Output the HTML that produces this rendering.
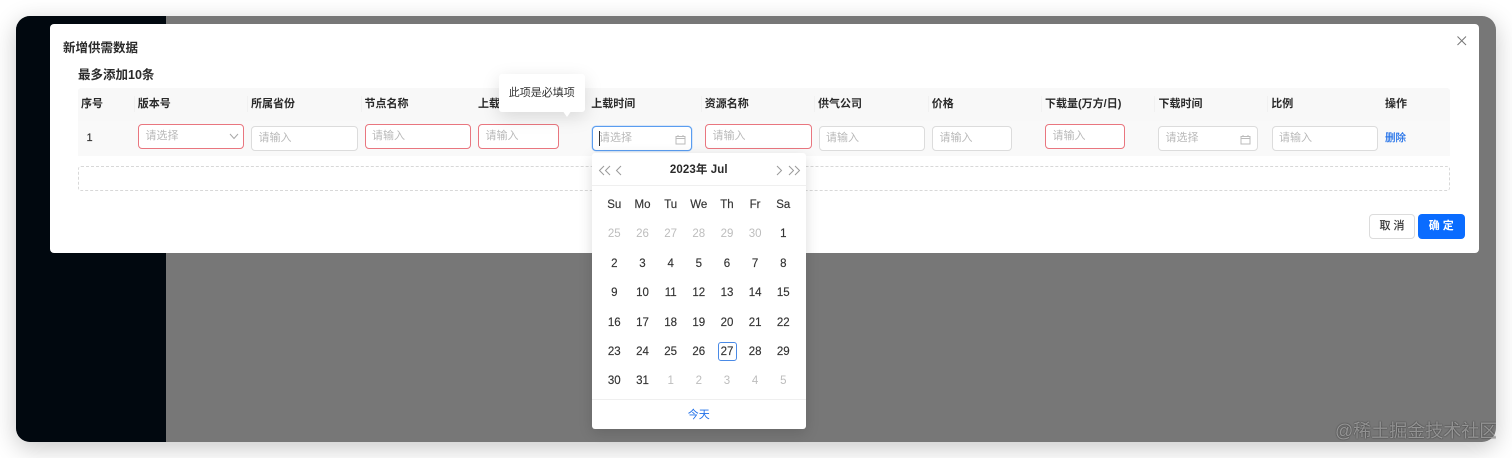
<!DOCTYPE html>
<html lang="zh"><head><meta charset="utf-8">
<style>
*{box-sizing:border-box}
html,body{margin:0;padding:0;width:1512px;height:458px;overflow:hidden;background:#fff}
body{font-family:"Liberation Sans","Noto Sans CJK SC",sans-serif;color:#262626;position:relative}
.a{position:absolute;white-space:nowrap}
#wrap{position:absolute;left:0;top:0;width:1512px;height:458px;filter:blur(.35px)}
#win{left:16px;top:16px;width:1480px;height:426px;border-radius:14px;background:#777;overflow:hidden;box-shadow:0 6px 24px rgba(0,0,0,.22)}
#side{left:0;top:0;width:150.300px;height:426px;background:#01080f}
#modal{left:49.500px;top:23.500px;width:1429.500px;height:229px;background:#fff;border-radius:4px}
.th{font-size:11px;font-weight:700;top:96.500px;line-height:14px;color:#2a2a2a}
.sep{width:1px;height:16px;top:96px;background:#f1f1f1}
.ip{height:25px;border:1.400px solid #dcdcdc;border-radius:4px;background:#fff;font-size:11px;color:#b9b9b9;line-height:23.500px;padding-left:6.500px}
.er{border-color:#e9767f;top:123.500px}
.no{top:125.500px}
.pop{background:#fff;border-radius:3px;box-shadow:0 4px 14px rgba(0,0,0,.14)}
.d{width:28px;text-align:center;font-size:11.500px;line-height:16px;color:#333;-webkit-text-stroke:.15px #333}
.m{color:#bdbdbd;-webkit-text-stroke:0}
</style></head><body>
<div id="wrap">
<div id="win" class="a"><div id="side" class="a"></div></div>
<div id="modal" class="a"></div>

<div class="a" style="left:63px;top:40px;font-size:12.500px;font-weight:700;line-height:16px;color:#2a2a2a">新增供需数据</div>
<div class="a" style="left:78px;top:66.500px;font-size:12.500px;font-weight:700;line-height:16px;color:#2a2a2a">最多添加10条</div>
<svg class="a" style="left:1456px;top:35px" width="12" height="12" viewBox="0 0 12 12"><path d="M1.500 1.500L10 10M10 1.500L1.500 10" stroke="#777" stroke-width="1" fill="none"/></svg>

<div class="a" style="left:78px;top:88px;width:1372px;height:33px;background:#f8f8f8;border-radius:3px 3px 0 0"></div>
<div class="a" style="left:78px;top:121px;width:1372px;height:35px;background:#f9f9f9"></div>

<div class="a th" style="left:81px">序号</div>
<div class="a th" style="left:137.800px">版本号</div>
<div class="a th" style="left:251px">所属省份</div>
<div class="a th" style="left:364.500px">节点名称</div>
<div class="a th" style="left:478px">上载</div>
<div class="a th" style="left:591.300px">上载时间</div>
<div class="a th" style="left:704.800px">资源名称</div>
<div class="a th" style="left:818px">供气公司</div>
<div class="a th" style="left:931.800px">价格</div>
<div class="a th" style="left:1045px">下载量(万方/日)</div>
<div class="a th" style="left:1158.500px">下载时间</div>
<div class="a th" style="left:1271.300px">比例</div>
<div class="a th" style="left:1385px">操作</div>
<div class="a sep" style="left:134px"></div><div class="a sep" style="left:247px"></div><div class="a sep" style="left:361px"></div><div class="a sep" style="left:701px"></div><div class="a sep" style="left:814px"></div><div class="a sep" style="left:928px"></div><div class="a sep" style="left:1041px"></div><div class="a sep" style="left:1154px"></div><div class="a sep" style="left:1267px"></div>

<div class="a" style="left:86.500px;top:130.500px;font-size:11px;line-height:14px;color:#333;-webkit-text-stroke:.15px #333">1</div>

<div class="a ip er" style="left:138px;width:106px">请选择<svg class="a" style="left:90px;top:8px" width="10" height="7" viewBox="0 0 10 7"><path d="M1 1L5 5.500L9 1" stroke="#a8a8a8" fill="none"/></svg></div>
<div class="a ip no" style="left:251px;width:106.500px">请输入</div>
<div class="a ip er" style="left:364.500px;width:106.500px">请输入</div>
<div class="a ip er" style="left:478px;width:81px">请输入</div>
<div class="a ip no" style="left:591.500px;width:100px;border-color:#5a9df0;box-shadow:0 0 0 .5px rgba(90,157,240,.4)"><span class="a" style="left:6px;top:4px;width:1px;height:15px;background:#333"></span>请选择
<svg class="a" style="left:82px;top:7px" width="11" height="11" viewBox="0 0 11 11"><path d="M1 2.500H10V10H1ZM1 4.500H10M3 1V3M8 1V3" stroke="#bbb" fill="none"/></svg></div>
<div class="a ip er" style="left:705px;width:106.500px">请输入</div>
<div class="a ip no" style="left:818.500px;width:106.500px">请输入</div>
<div class="a ip no" style="left:932px;width:80px">请输入</div>
<div class="a ip er" style="left:1045px;width:80px">请输入</div>
<div class="a ip no" style="left:1158px;width:100px">请选择
<svg class="a" style="left:81px;top:7px" width="11" height="11" viewBox="0 0 11 11"><path d="M1 2.500H10V10H1ZM1 4.500H10M3 1V3M8 1V3" stroke="#bbb" fill="none"/></svg></div>
<div class="a ip no" style="left:1271.500px;width:106.500px">请输入</div>
<div class="a" style="left:1385px;top:130.500px;font-size:10.500px;line-height:14px;color:#1f6fe8;-webkit-text-stroke:.2px #1f6fe8">删除</div>

<div class="a" style="left:78px;top:165.500px;width:1372px;height:25px;border:1px dashed #d8d8d8;border-radius:3px"></div>

<div class="a" style="left:1369px;top:213.500px;width:46px;height:25px;border:1.250px solid #dcdcdc;border-radius:4px;background:#fff;font-size:11px;line-height:22.500px;text-align:center;color:#333;-webkit-text-stroke:.2px #333">取 消</div>
<div class="a" style="left:1418px;top:213.500px;width:46.500px;height:25px;border-radius:4px;background:#0a6cff;font-size:11px;line-height:25px;text-align:center;color:#fff;font-weight:700">确 定</div>

<!-- tooltip -->
<div class="a pop" style="left:499px;top:73.800px;width:85.500px;height:38px;font-size:11px;line-height:38px;text-align:center;color:#333;box-shadow:0 5px 18px rgba(0,0,0,.13)">此项是必填项</div>
<div class="a" style="left:562px;top:110px;width:0;height:0;border-left:5px solid transparent;border-right:5px solid transparent;border-top:7px solid #fff"></div>

<!-- calendar -->
<div class="a pop" style="left:591.600px;top:153px;width:214.400px;height:276px"></div>
<svg class="a" style="left:597.500px;top:163.500px" width="28" height="13" viewBox="0 0 28 13"><path d="M6 2L1.500 6.500L6 11M12 2L7.500 6.500L12 11M23 2L18.500 6.500L23 11" stroke="#9a9a9a" fill="none"/></svg>
<svg class="a" style="left:774.500px;top:163.500px" width="28" height="13" viewBox="0 0 28 13"><path d="M2 2L6.500 6.500L2 11M14 2L18.500 6.500L14 11M20 2L24.500 6.500L20 11" stroke="#9a9a9a" fill="none"/></svg>
<div class="a" style="left:591.600px;top:162.300px;width:214.400px;text-align:center;font-size:11.500px;font-weight:700;line-height:16px;color:#2a2a2a;letter-spacing:.1px">2023年 Jul</div>
<div class="a" style="left:592px;top:185px;width:214px;height:1px;background:#efefef"></div>

<div class="a d" style="left:600.300px;top:196.700px">Su</div><div class="a d" style="left:628.500px;top:196.700px">Mo</div><div class="a d" style="left:656.700px;top:196.700px">Tu</div><div class="a d" style="left:684.800px;top:196.700px">We</div><div class="a d" style="left:713px;top:196.700px">Th</div><div class="a d" style="left:741.100px;top:196.700px">Fr</div><div class="a d" style="left:769.300px;top:196.700px">Sa</div>

<div class="a d m" style="left:600.300px;top:226.200px">25</div><div class="a d m" style="left:628.500px;top:226.200px">26</div><div class="a d m" style="left:656.700px;top:226.200px">27</div><div class="a d m" style="left:684.800px;top:226.200px">28</div><div class="a d m" style="left:713px;top:226.200px">29</div><div class="a d m" style="left:741.100px;top:226.200px">30</div><div class="a d" style="left:769.300px;top:226.200px">1</div>

<div class="a d" style="left:600.300px;top:255.700px">2</div><div class="a d" style="left:628.500px;top:255.700px">3</div><div class="a d" style="left:656.700px;top:255.700px">4</div><div class="a d" style="left:684.800px;top:255.700px">5</div><div class="a d" style="left:713px;top:255.700px">6</div><div class="a d" style="left:741.100px;top:255.700px">7</div><div class="a d" style="left:769.300px;top:255.700px">8</div>

<div class="a d" style="left:600.300px;top:285.200px">9</div><div class="a d" style="left:628.500px;top:285.200px">10</div><div class="a d" style="left:656.700px;top:285.200px">11</div><div class="a d" style="left:684.800px;top:285.200px">12</div><div class="a d" style="left:713px;top:285.200px">13</div><div class="a d" style="left:741.100px;top:285.200px">14</div><div class="a d" style="left:769.300px;top:285.200px">15</div>

<div class="a d" style="left:600.300px;top:314.700px">16</div><div class="a d" style="left:628.500px;top:314.700px">17</div><div class="a d" style="left:656.700px;top:314.700px">18</div><div class="a d" style="left:684.800px;top:314.700px">19</div><div class="a d" style="left:713px;top:314.700px">20</div><div class="a d" style="left:741.100px;top:314.700px">21</div><div class="a d" style="left:769.300px;top:314.700px">22</div>

<div class="a d" style="left:600.300px;top:344.200px">23</div><div class="a d" style="left:628.500px;top:344.200px">24</div><div class="a d" style="left:656.700px;top:344.200px">25</div><div class="a d" style="left:684.800px;top:344.200px">26</div><div class="a d" style="left:713px;top:344.200px">27</div><div class="a d" style="left:741.100px;top:344.200px">28</div><div class="a d" style="left:769.300px;top:344.200px">29</div>
<div class="a" style="left:717.500px;top:342px;width:19px;height:19px;border:1.250px solid #4a8ae6;border-radius:3px"></div>

<div class="a d" style="left:600.300px;top:373.200px">30</div><div class="a d" style="left:628.500px;top:373.200px">31</div><div class="a d m" style="left:656.700px;top:373.200px">1</div><div class="a d m" style="left:684.800px;top:373.200px">2</div><div class="a d m" style="left:713px;top:373.200px">3</div><div class="a d m" style="left:741.100px;top:373.200px">4</div><div class="a d m" style="left:769.300px;top:373.200px">5</div>

<div class="a" style="left:592px;top:399px;width:214px;height:1px;background:#efefef"></div>
<div class="a" style="left:591.600px;top:407.700px;width:214.400px;text-align:center;font-size:11px;line-height:15px;color:#1f6fe8">今天</div>

<div class="a" style="left:1335px;top:420px;font-size:18px;line-height:22px;color:rgba(175,175,175,.75);text-shadow:0 0 1.500px rgba(30,30,30,.9);width:161px;overflow:hidden">@稀土掘金技术社区</div>
</div>
</body></html>
